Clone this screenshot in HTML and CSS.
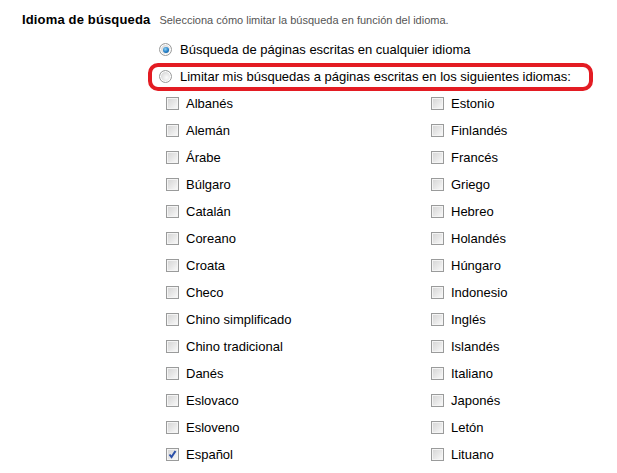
FILE: index.html
```html
<!DOCTYPE html>
<html lang="es">
<head>
<meta charset="utf-8">
<title>Idioma de búsqueda</title>
<link rel="stylesheet" href="styles.css">
</head>
<body>
<section class="pref">
  <div class="pref-head">
    <h2 class="pref-title">Idioma de búsqueda</h2>
    <span class="pref-desc">Selecciona cómo limitar la búsqueda en función del idioma.</span>
  </div>
  <div class="options">
    <label class="radio-row"><span class="radio checked"></span><span>Búsqueda de páginas escritas en cualquier idioma</span></label>
    <label class="radio-row marked"><span class="radio"></span><span>Limitar mis búsquedas a páginas escritas en los siguientes idiomas:</span><span class="highlight"></span></label>
    <div class="langs">
      <label class="lang"><span class="cb"></span>Albanés</label>
      <label class="lang"><span class="cb"></span>Estonio</label>
      <label class="lang"><span class="cb"></span>Alemán</label>
      <label class="lang"><span class="cb"></span>Finlandés</label>
      <label class="lang"><span class="cb"></span>Árabe</label>
      <label class="lang"><span class="cb"></span>Francés</label>
      <label class="lang"><span class="cb"></span>Búlgaro</label>
      <label class="lang"><span class="cb"></span>Griego</label>
      <label class="lang"><span class="cb"></span>Catalán</label>
      <label class="lang"><span class="cb"></span>Hebreo</label>
      <label class="lang"><span class="cb"></span>Coreano</label>
      <label class="lang"><span class="cb"></span>Holandés</label>
      <label class="lang"><span class="cb"></span>Croata</label>
      <label class="lang"><span class="cb"></span>Húngaro</label>
      <label class="lang"><span class="cb"></span>Checo</label>
      <label class="lang"><span class="cb"></span>Indonesio</label>
      <label class="lang"><span class="cb"></span>Chino simplificado</label>
      <label class="lang"><span class="cb"></span>Inglés</label>
      <label class="lang"><span class="cb"></span>Chino tradicional</label>
      <label class="lang"><span class="cb"></span>Islandés</label>
      <label class="lang"><span class="cb"></span>Danés</label>
      <label class="lang"><span class="cb"></span>Italiano</label>
      <label class="lang"><span class="cb"></span>Eslovaco</label>
      <label class="lang"><span class="cb"></span>Japonés</label>
      <label class="lang"><span class="cb"></span>Esloveno</label>
      <label class="lang"><span class="cb"></span>Letón</label>
      <label class="lang"><span class="cb checked"><svg viewBox="0 0 13 13" width="13" height="13"><path d="M3.5 6.5 L5.5 9 L9.5 3" fill="none" stroke="#2a4fa8" stroke-width="2"/></svg></span>Español</label>
      <label class="lang"><span class="cb"></span>Lituano</label>
    </div>
  </div>
</section>
</body>
</html>
```
FILE: styles.css
```css
html, body {
  margin: 0;
  padding: 0;
  background: #fff;
}
body {
  font-family: "Liberation Sans", Arial, sans-serif;
  font-size: 13px;
  color: #000;
}
.pref {
  padding: 6px 0 0 22px;
}
.pref-head {
  display: flex;
  align-items: baseline;
  gap: 9px;
  height: 30px;
  line-height: 27px;
}
.pref-title {
  margin: 0;
  font-size: 13px;
  font-weight: bold;
  letter-spacing: 0.15px;
  color: #000;
}
.pref-desc {
  font-size: 11px;
  color: #555;
}
.options {
  padding-left: 137px;
}
.radio-row {
  position: relative;
  display: flex;
  align-items: center;
  gap: 8px;
  height: 27px;
  line-height: 27px;
}
.radio {
  width: 11px;
  height: 11px;
  border: 1px solid #9a9b9b;
  border-radius: 50%;
  background: radial-gradient(circle at 60% 60%, #fbfbfb 0%, #dcdcdc 60%, #c8c8c8 100%);
  box-shadow: inset 0 0 0 1px #fff;
  position: relative;
}
.radio.checked::after {
  content: "";
  position: absolute;
  left: 2.5px;
  top: 2.5px;
  width: 6px;
  height: 6px;
  border-radius: 50%;
  background: radial-gradient(circle at 40% 35%, #8fd3f5 0%, #1f7bc4 55%, #0d4e8c 100%);
}
.highlight {
  position: absolute;
  left: -11px;
  top: 0;
  width: 437px;
  height: 20px;
  border: 4px solid #e31c23;
  border-radius: 10px;
  pointer-events: none;
}
.langs {
  display: grid;
  grid-template-columns: 265px 160px;
  padding-left: 7px;
}
.lang {
  display: flex;
  align-items: center;
  gap: 7px;
  height: 27px;
  line-height: 27px;
}
.cb {
  box-sizing: border-box;
  width: 13px;
  height: 13px;
  border: 1px solid #9a9b9b;
  background: linear-gradient(135deg, #d4d4d4 0%, #e6e6e6 50%, #fbfbfb 100%);
  box-shadow: inset 0 0 0 1px #f4f4f4;
  display: flex;
  align-items: center;
  justify-content: center;
}
.cb svg {
  display: block;
  margin: -1px;
}
```
